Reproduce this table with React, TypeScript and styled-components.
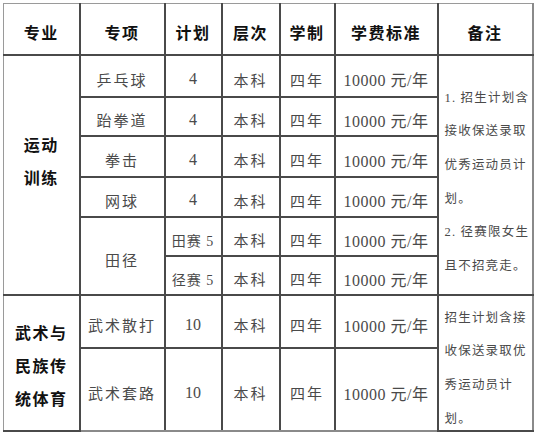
import styled, { createGlobalStyle } from 'styled-components';

const GlobalStyle = createGlobalStyle`
  html, body {
    margin: 0;
    padding: 0;
    background: #fff;
  }
  body {
    font-family: 'Liberation Serif', 'Noto Sans CJK SC', serif;
    color: #333;
  }
`;

const Page = styled.div`
  padding: 3px 0 0 3px;
`;

const Table = styled.table`
  width: 529px;
  table-layout: fixed;
  border-collapse: collapse;
  border-top: 1px solid #9a9a9a;
  border-left: 1px solid #9a9a9a;
  border-right: 2px solid #8a8a8a;
  border-bottom: 2px solid #8a8a8a;
`;

const Row = styled.tr<{ $h: number }>`
  height: ${(p) => p.$h}px;
`;

const Th = styled.th`
  border: 2px solid #4a4a4a;
  padding: 6px 0 0;
  font-size: 16px;
  font-weight: 700;
  letter-spacing: 1.5px;
  color: #111;
  text-align: center;
  vertical-align: middle;
  ${Row}:first-child > & {
    border-top: 1px solid #9a9a9a;
  }
  &:first-child {
    border-left: 1px solid #9a9a9a;
  }
  &:last-child {
    border-right: 2px solid #8a8a8a;
  }
`;

const Td = styled.td<{ $small?: boolean }>`
  border: 2px solid #4a4a4a;
  padding: 7px 0 0;
  font-size: ${(p) => (p.$small ? 14 : 15)}px;
  letter-spacing: ${(p) => (p.$small ? 1 : 2)}px;
  color: #4a4a4a;
  text-align: center;
  vertical-align: middle;
  white-space: nowrap;
  ${Row}:last-child > & {
    border-bottom: 2px solid #8a8a8a;
  }
`;

const Num = styled(Td)`
  font-size: 16px;
  letter-spacing: 0;
`;

const Fee = styled(Td)`
  font-size: 16px;
  letter-spacing: 0.5px;
`;

const Major = styled.td<{ $shift: number }>`
  border: 2px solid #4a4a4a;
  border-left: 1px solid #9a9a9a;
  padding: ${(p) => (p.$shift > 0 ? `${p.$shift}px 0 0` : `0 0 ${-p.$shift}px`)};
  font-size: 16px;
  font-weight: 700;
  letter-spacing: 1.5px;
  line-height: 33px;
  color: #111;
  text-align: center;
  vertical-align: middle;
  ${Row}:last-child > & {
    border-bottom: 2px solid #8a8a8a;
  }
`;

const Remark = styled.td`
  border: 2px solid #4a4a4a;
  border-right: 2px solid #8a8a8a;
  padding: 0 0 0 6px;
  vertical-align: top;
  ${Row}:last-child > & {
    border-bottom: 2px solid #8a8a8a;
  }
`;

const RemarkText = styled.div<{ $top: number; $h: number }>`
  height: ${(p) => p.$h}px;
  padding-top: ${(p) => p.$top}px;
  box-sizing: border-box;
  font-size: 12.5px;
  letter-spacing: 1.2px;
  line-height: 33.7px;
  color: #4a4a4a;
  white-space: nowrap;
`;

const sports = [
  { name: '乒乓球', plan: '4', h: 42 },
  { name: '跆拳道', plan: '4', h: 39 },
  { name: '拳击', plan: '4', h: 41 },
  { name: '网球', plan: '4', h: 40 },
];

const remark1 = [
  '1. 招生计划含',
  '接收保送录取',
  '优秀运动员计',
  '划。',
  '2. 径赛限女生',
  '且不招竞走。',
];

const remark2 = ['招生计划含接', '收保送录取优', '秀运动员计', '划。'];

const fee = '10000 元/年';

export default function App() {
  return (
    <Page>
      <GlobalStyle />
      <Table>
        <colgroup>
          <col style={{ width: 76 }} />
          <col style={{ width: 85 }} />
          <col style={{ width: 57 }} />
          <col style={{ width: 58 }} />
          <col style={{ width: 55 }} />
          <col style={{ width: 103 }} />
          <col style={{ width: 95 }} />
        </colgroup>
        <tbody>
          <Row $h={51}>
            <Th>专业</Th>
            <Th>专项</Th>
            <Th>计划</Th>
            <Th>层次</Th>
            <Th>学制</Th>
            <Th>学费标准</Th>
            <Th>备注</Th>
          </Row>
          {sports.map((s, i) => (
            <Row $h={s.h} key={s.name}>
              {i === 0 && (
                <Major rowSpan={6} $shift={-26}>
                  运动
                  <br />
                  训练
                </Major>
              )}
              <Td>{s.name}</Td>
              <Num>{s.plan}</Num>
              <Td>本科</Td>
              <Td>四年</Td>
              <Fee>{fee}</Fee>
              {i === 0 && (
                <Remark rowSpan={6}>
                  <RemarkText $top={26} $h={236}>
                    {remark1.map((l) => (
                      <div key={l}>{l}</div>
                    ))}
                  </RemarkText>
                </Remark>
              )}
            </Row>
          ))}
          <Row $h={39}>
            <Td rowSpan={2}>田径</Td>
            <Td $small>田赛 5</Td>
            <Td>本科</Td>
            <Td>四年</Td>
            <Fee>{fee}</Fee>
          </Row>
          <Row $h={39}>
            <Td $small>径赛 5</Td>
            <Td>本科</Td>
            <Td>四年</Td>
            <Fee>{fee}</Fee>
          </Row>
          <Row $h={53}>
            <Major rowSpan={2} $shift={8}>
              武术与
              <br />
              民族传
              <br />
              统体育
            </Major>
            <Td>武术散打</Td>
            <Num>10</Num>
            <Td>本科</Td>
            <Td>四年</Td>
            <Fee>{fee}</Fee>
            <Remark rowSpan={2}>
              <RemarkText $top={6} $h={130}>
                {remark2.map((l) => (
                  <div key={l}>{l}</div>
                ))}
              </RemarkText>
            </Remark>
          </Row>
          <Row $h={83}>
            <Td>武术套路</Td>
            <Num>10</Num>
            <Td>本科</Td>
            <Td>四年</Td>
            <Fee>{fee}</Fee>
          </Row>
        </tbody>
      </Table>
    </Page>
  );
}
